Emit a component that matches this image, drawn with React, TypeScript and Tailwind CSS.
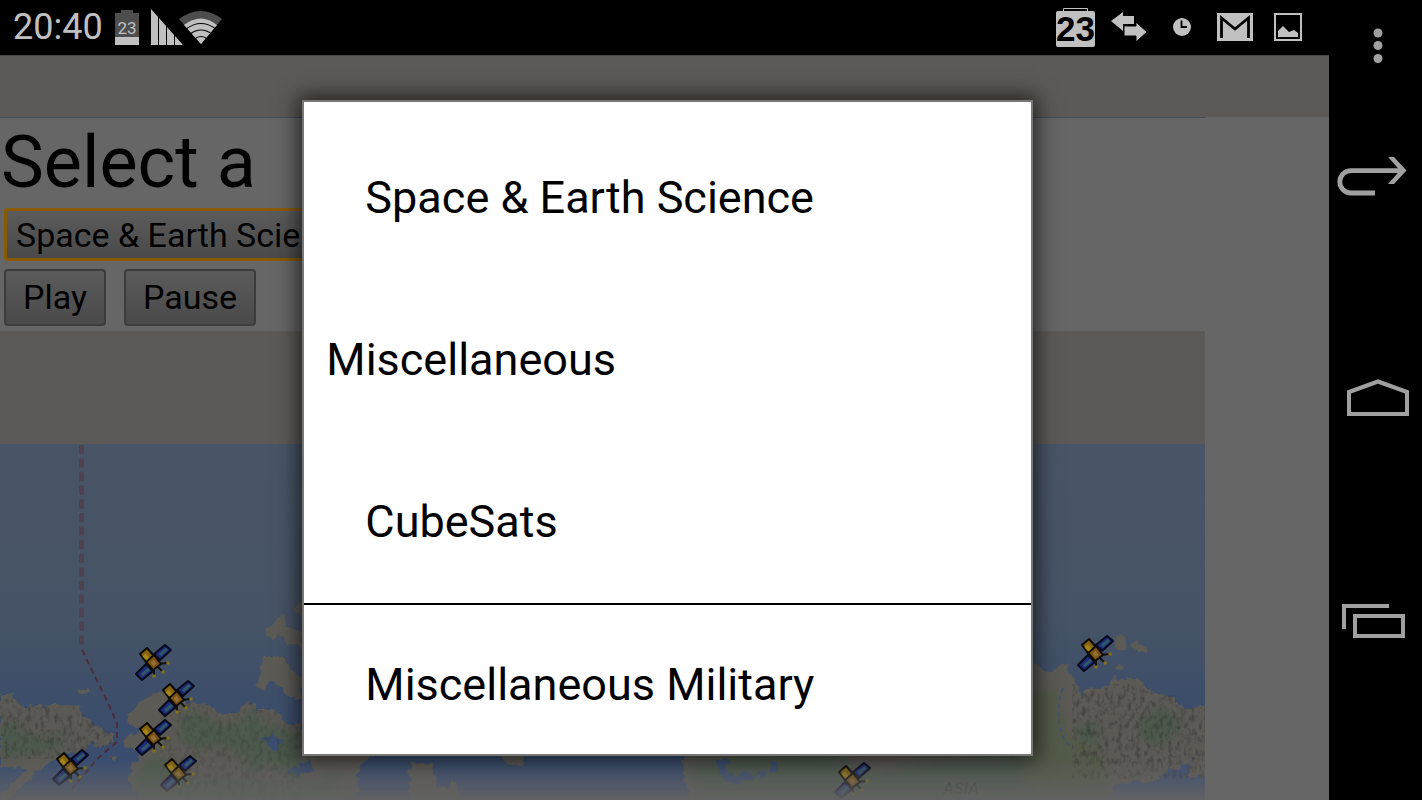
import React from 'react';

const categories = [
  { label: 'Space & Earth Science', group: false, divider: false },
  { label: 'Miscellaneous', group: true, divider: false },
  { label: 'CubeSats', group: false, divider: false },
  { label: 'Miscellaneous Military', group: false, divider: true },
];

const satellites = [
  { x: 135, y: 200 },
  { x: 158, y: 236 },
  { x: 135, y: 275 },
  { x: 52, y: 305 },
  { x: 160, y: 311 },
  { x: 1077, y: 191 },
  { x: 834, y: 318 },
];

const land = [
  'M0 249 L15 251 L18 261 L24 264 L37 260 L50 263 L63 261 L78 264 L90 276 L100 283 L112 290 L113 298 L106 302 L100 304 L90 298 L85 308 L60 311 L50 320 L35 330 L20 344 L10 356 L0 356 L0 350 L12 340 L28 326 L0 322 Z',
  'M77 247 L80 244 L88 244 L88 248 L82 251 L77 250 Z',
  'M127 273 L137 263 L141 256 L147 251 L160 248 L173 253 L186 257 L200 261 L213 263 L220 271 L232 268 L240 266 L247 258 L255 260 L256 266 L277 266 L281 274 L290 279 L302 283 L420 283 L390 306 L372 314 L363 318 L358 330 L356 356 L143 356 L134 346 L128 336 L132 319 L143 309 L134 306 L123 299 L126 294 L133 291 L143 283 L128 281 Z',
  'M265 186 L274 176 L287 171 L285 182 L294 186 L302 185 L302 203 L288 200 L283 193 L273 194 L266 190 Z',
  'M292 164 L302 156 L302 172 L296 170 Z',
  'M262 213 L283 213 L288 219 L290 227 L302 233 L302 256 L288 252 L279 242 L268 238 L264 248 L257 242 L260 230 Z',
  'M108 312 L116 313 L115 316 L110 315 Z',
  'M410 319 L430 320 L437 332 L438 344 L450 345 L453 333 L458 345 L462 356 L408 356 Z',
  'M500 308 L523 308 L523 321 L518 323 L507 319 L501 312 Z',
  'M682 300 L1000 240 L1030 219 L1037 221 L1045 228 L1052 227 L1060 221 L1066 220 L1070 227 L1075 239 L1082 251 L1087 243 L1099 245 L1110 243 L1112 233 L1130 234 L1143 239 L1145 246 L1150 248 L1165 252 L1175 251 L1178 263 L1190 264 L1220 262 L1220 356 L690 356 L684 330 Z',
  'M1113 195 L1122 191 L1128 195 L1125 205 L1117 206 Z',
  'M1132 198 L1147 203 L1145 208 L1134 206 Z',
  'M1114 220 L1119 219 L1124 223 L1121 226 L1115 225 Z',
];

const forest = [
  'M0 280 L16 276 L26 290 L48 294 L68 286 L62 306 L30 310 L10 316 L0 314 Z',
  'M176 275 L200 266 L215 280 L240 278 L252 262 L262 278 L280 284 L302 290 L302 340 L270 320 L250 332 L244 312 L216 300 L196 308 L182 296 Z',
  'M134 330 L150 312 L176 320 L196 340 L232 336 L300 344 L340 330 L330 356 L140 356 Z',
  'M690 322 L740 312 L830 312 L870 330 L930 318 L1030 314 L1060 356 L700 356 Z',
  'M1137 274 L1160 264 L1180 272 L1176 290 L1158 304 L1140 292 Z',
  'M1076 284 L1096 276 L1098 298 L1082 304 Z',
];

function Satellite({ x, y }: { x: number; y: number }) {
  return (
    <g transform={`translate(${x} ${y})`} strokeLinejoin="round">
      <path d="M9 25 L27 9" stroke="#0b0b10" strokeWidth="5" />
      <path d="M30 1 L36 6 L25 16 L19 10 Z" fill="#1f2a78" stroke="#07091c" strokeWidth="2" />
      <path d="M25 11 L32 5" stroke="#2d5868" strokeWidth="3" />
      <path d="M1 30 L7 36 L18 27 L11 20 Z" fill="#1f2a78" stroke="#07091c" strokeWidth="2" />
      <path d="M7 31 L14 25" stroke="#2d5868" strokeWidth="3" />
      <path d="M22 20 L33 19 M21 21 L28 28 M19 22 L19 32" stroke="#111" strokeWidth="2" />
      <path d="M5 10 L12 4 L19 12 L11 18 Z" fill="#86640f" stroke="#0d0a04" strokeWidth="2" />
      <path d="M11 18 L19 11 L26 20 L18 26 Z" fill="#7a5212" stroke="#0d0a04" strokeWidth="2" />
      <path d="M9 11 L13 15" stroke="#a58418" strokeWidth="4" />
      <path d="M17 17 L20 21" stroke="#946e34" strokeWidth="4" />
      <g fill="#857216">
        <circle cx="33" cy="19" r="1.8" />
        <circle cx="28" cy="28" r="1.8" />
        <circle cx="19" cy="32" r="1.8" />
      </g>
    </g>
  );
}

function WorldMap() {
  return (
    <svg
      className="block min-h-0 w-full flex-1"
      viewBox="0 0 1205 356"
      preserveAspectRatio="xMinYMin slice"
      role="img"
      aria-label="Satellite map"
    >
      <defs>
        <linearGradient id="water" x1="0" y1="0" x2="0" y2="1">
          <stop offset="0" stopColor="#495566" />
          <stop offset="0.5" stopColor="#465366" />
          <stop offset="0.72" stopColor="#3d4e6a" />
          <stop offset="1" stopColor="#384c72" />
        </linearGradient>
        <linearGradient id="fade" x1="0" y1="0" x2="0" y2="1">
          <stop offset="0" stopColor="#626262" stopOpacity="0" />
          <stop offset="1" stopColor="#626262" stopOpacity="0.95" />
        </linearGradient>
        <clipPath id="land">
          {land.map((d) => (
            <path key={d} d={d} />
          ))}
        </clipPath>
        <filter id="relief" x="0" y="0" width="100%" height="100%" colorInterpolationFilters="sRGB">
          <feTurbulence type="fractalNoise" baseFrequency="0.22 0.14" numOctaves="3" seed="4" />
          <feColorMatrix values="0 0 0 0 0.2  0 0 0 0 0.2  0 0 0 0 0.19  3 0 0 0 -1.4" />
        </filter>
        <filter id="soft" colorInterpolationFilters="sRGB">
          <feGaussianBlur stdDeviation="4" />
        </filter>
        <filter id="coast" x="-2%" y="-5%" width="104%" height="110%" colorInterpolationFilters="sRGB">
          <feTurbulence type="fractalNoise" baseFrequency="0.12" numOctaves="2" seed="7" result="n" />
          <feDisplacementMap in="SourceGraphic" in2="n" scale="10" xChannelSelector="R" yChannelSelector="G" />
        </filter>
      </defs>
      <rect width="1205" height="356" fill="url(#water)" />
      <g filter="url(#coast)">
        <g clipPath="url(#land)">
          <rect width="1220" height="366" fill="#5c5a55" />
          <g fill="#4c594c" filter="url(#soft)">
            {forest.map((d) => (
              <path key={d} d={d} />
            ))}
            <path d="M1030 246 L1058 246 L1066 290 L1100 306 L1110 356 L1020 356 Z" fill="#525a49" />
          </g>
        </g>
        {/* inland water */}
        <g fill="#3c4f73">
          <path d="M262 294 L272 291 L281 296 L279 307 L272 305 Z" />
          <path d="M288 326 L310 316 L312 328 L296 332 Z" />
          <path d="M716 314 L728 316 L727 331 L760 329 L735 341 L718 332 Z" />
          <path d="M758 328 L765 327 L767 333 L760 335 Z" />
          <path d="M770 318 L776 318 L777 328 L772 327 Z" />
          <path d="M1112 350 L1117 339 L1158 338 L1163 328 L1176 326 L1192 316 L1184 334 L1215 332 L1215 360 L1112 360 Z" />
        </g>
      </g>
      <g clipPath="url(#land)">
        <rect x="0" y="255" width="112" height="60" filter="url(#relief)" opacity="0.5" />
        <rect x="160" y="258" width="142" height="98" filter="url(#relief)" opacity="0.3" />
        <rect x="1072" y="240" width="133" height="95" filter="url(#relief)" opacity="0.55" />
      </g>
      <path d="M1063 244 Q1056 262 1060 282 Q1062 298 1074 304" fill="none" stroke="#3f5270" strokeWidth="1.5" strokeDasharray="5 3" />
      <path d="M81.500 1 V205" fill="none" stroke="#4e4150" strokeWidth="5" strokeDasharray="9 4.6" />
      <path d="M82 206 L110 263 L117 280 V298 L98 314 L72 345" fill="none" stroke="#4a2c3a" strokeWidth="2" strokeDasharray="6 4" />
      <text x="943" y="350" fill="#3b3b3a" fontFamily="Roboto, sans-serif" fontSize="17" fontStyle="italic">
        ASIA
      </text>
      {satellites.map((s) => (
        <Satellite key={`${s.x}-${s.y}`} x={s.x} y={s.y} />
      ))}
      <rect y="316" width="1205" height="40" fill="url(#fade)" />
    </svg>
  );
}

function StatusBar() {
  return (
    <header className="flex h-[55px] shrink-0 items-center justify-between bg-black pr-[15px] pb-px pl-[13px] text-[#c0c0c0]">
      <div className="flex items-center gap-3">
        <time className="text-4xl leading-none">20:40</time>
        <svg width="24" height="36" viewBox="0 0 24 36" aria-label="Battery">
          <path d="M0 4 H6 V1 H18 V4 H24 V28 H0 Z" fill="#4d4d4d" />
          <path d="M0 28 H24 V36 H0 Z" fill="#c0c0c0" />
          <text x="12" y="25" textAnchor="middle" fill="#c0c0c0" fontFamily="Roboto, sans-serif" fontSize="17">
            23
          </text>
        </svg>
        <svg width="72" height="36" viewBox="0 0 72 36" aria-label="Signal and Wi-Fi">
          <path d="M0 0 L32 36 H0 Z" fill="#c0c0c0" />
          <path d="M7.500 6 V36 M15.500 14 V36 M23.500 22 V36" stroke="#000" strokeWidth="1" />
          <path d="M28 10 Q50 -6 71 10 L50 35 Z" fill="#4d4d4d" />
          <path d="M33 16 Q50 3 66 16 L50 35 Z" fill="#c0c0c0" />
          <path d="M35 20 Q50 9 65 20 M39 25 Q50 17 61 25 M43.500 30 Q50 25 56.500 30" fill="none" stroke="#000" strokeWidth="1.200" />
        </svg>
      </div>
      <div className="flex items-center">
        <span className="flex w-[53px] justify-center">
          <svg width="39" height="40" viewBox="0 0 39 40" aria-label="Calendar">
            <path d="M7.500 4 V1.500 H31.500 V4" fill="none" stroke="#c0c0c0" strokeWidth="1" />
            <rect y="4" width="39" height="36" rx="2" fill="#c0c0c0" />
            <text x="19.500" y="34" textAnchor="middle" fill="#000" fontFamily="'Liberation Sans', Arial, sans-serif" fontSize="35" fontWeight="700">
              23
            </text>
          </svg>
        </span>
        <span className="flex w-[53px] justify-center">
          <svg width="36" height="30" viewBox="0 0 36 30" aria-label="Data transfer" fill="#c0c0c0">
            <path d="M0 9 L12 0 V4 H23 V12 H12 V19 Z" />
            <path d="M36 20 L25 10 V14 H13 V24 H25 V30 Z" stroke="#000" strokeWidth="1" />
          </svg>
        </span>
        <span className="flex w-[53px] justify-center">
          <svg width="20" height="20" viewBox="0 0 20 20" aria-label="Alarm">
            <circle cx="10" cy="10" r="9" fill="#c0c0c0" />
            <path d="M9.500 3.500 V10 H15" fill="none" stroke="#000" strokeWidth="1.800" />
          </svg>
        </span>
        <span className="flex w-[53px] justify-center">
          <svg width="36" height="28" viewBox="0 0 36 28" aria-label="Mail">
            <rect width="36" height="28" fill="#c0c0c0" />
            <path d="M4.500 25 V5 L18 16 L31.500 5 V25" fill="none" stroke="#000" strokeWidth="2.800" />
          </svg>
        </span>
        <span className="flex w-[53px] justify-center">
          <svg width="28" height="28" viewBox="0 0 28 28" aria-label="Screenshot saved">
            <rect x="1" y="1" width="26" height="26" fill="none" stroke="#c0c0c0" strokeWidth="2" />
            <path d="M4 24 V18 L9 13 L15 19 L20 17 L24 20 V24 Z" fill="#c0c0c0" />
          </svg>
        </span>
      </div>
    </header>
  );
}

function NavigationBar() {
  return (
    <nav className="flex w-[93px] shrink-0 flex-col bg-black pb-[68px] text-[#a0a0a0]">
      <button type="button" aria-label="Menu" className="flex h-[65px] items-end justify-center pl-1">
        <svg width="12" height="38" viewBox="0 0 12 38" fill="currentColor">
          <circle cx="6" cy="6" r="4.500" />
          <circle cx="6" cy="18.500" r="4.500" />
          <circle cx="6" cy="31.500" r="4.500" />
        </svg>
      </button>
      <button type="button" aria-label="Back" className="flex flex-1 items-center pl-2">
        <svg width="70" height="40" viewBox="0 0 70 40" fill="none" stroke="currentColor">
          <path d="M38 37 H14 A11.200 11.200 0 0 1 14 14.600 H66" strokeWidth="4.800" />
          <path d="M51 1 H57 L69.500 14.600 L57 28 H51 L63 14.600 Z" fill="currentColor" stroke="none" />
        </svg>
      </button>
      <button type="button" aria-label="Home" className="flex flex-1 items-center justify-center pl-1">
        <svg width="64" height="38" viewBox="0 0 64 38" fill="none" stroke="currentColor" strokeWidth="4">
          <path d="M3 35 V13 L32 2.500 L61 13 V35 Z" />
        </svg>
      </button>
      <button type="button" aria-label="Recent apps" className="flex flex-1 items-center pl-3">
        <svg width="64" height="36" viewBox="0 0 64 36" fill="none" stroke="currentColor" strokeWidth="4">
          <path d="M3 26 V3 H48" />
          <rect x="14" y="13" width="48" height="20" />
        </svg>
      </button>
    </nav>
  );
}

export default function App() {
  return (
    <div className="flex h-screen overflow-hidden bg-black font-[Roboto,sans-serif]">
      <div className="flex min-w-0 flex-1 flex-col">
        <StatusBar />
        <div className="relative flex min-h-0 flex-1 flex-col bg-[#666666]">
          <div className="h-[62px] shrink-0 border-t border-[#484643] bg-[#5c5a57]" />
          <div className="mr-[124px] h-px shrink-0 bg-[#424b5c]" />
          <main className="mr-[124px] flex min-h-0 flex-1 flex-col text-black">
            <h1 className="pl-px text-7xl leading-[90px]">
              <label htmlFor="category">Select a</label>
            </h1>
            <div className="px-1">
              <select
                id="category"
                defaultValue="Space & Earth Science"
                className="block h-[53px] w-1/2 appearance-none rounded-sm border-3 border-[#8a5a00] bg-linear-to-b from-[#5b5b5b] to-[#4a4a4a] px-[9px] text-[34px] leading-[46px] outline-none"
              >
                {categories.map((c) => (
                  <option key={c.label}>{c.label}</option>
                ))}
              </select>
            </div>
            <div className="flex gap-[18px] px-1 pt-2 pb-[5px] text-[34px] leading-[53px]">
              <button type="button" className="rounded-sm border-2 border-[#3c3c3c] bg-linear-to-b from-[#5b5b5b] to-[#4a4a4a] px-[17px]">
                Play
              </button>
              <button type="button" className="rounded-sm border-2 border-[#3c3c3c] bg-linear-to-b from-[#5b5b5b] to-[#4a4a4a] px-[17px]">
                Pause
              </button>
            </div>
            <div className="h-[113px] shrink-0 bg-[#5c5a57]" />
            <WorldMap />
          </main>

          {/* Category picker */}
          <div className="absolute inset-0 flex items-center justify-center pt-px pl-[6px]">
            <div
              role="listbox"
              aria-label="Category"
              className="h-[88.2%] w-[55.2%] overflow-hidden border-2 border-[#777777] bg-white pt-[15px] shadow-[0_0_20px_4px_rgba(0,0,0,0.65)]"
            >
              {categories.map((c) => (
                <button
                  key={c.label}
                  type="button"
                  role="option"
                  aria-selected={c.label === 'Space & Earth Science'}
                  className={`block h-[162px] w-full text-left text-[45px] text-black ${c.group ? 'pl-[22px]' : 'pl-[61px]'} ${
                    c.divider ? 'border-t-2 border-black' : ''
                  }`}
                >
                  {c.label}
                </button>
              ))}
            </div>
          </div>
        </div>
      </div>
      <NavigationBar />
    </div>
  );
}
